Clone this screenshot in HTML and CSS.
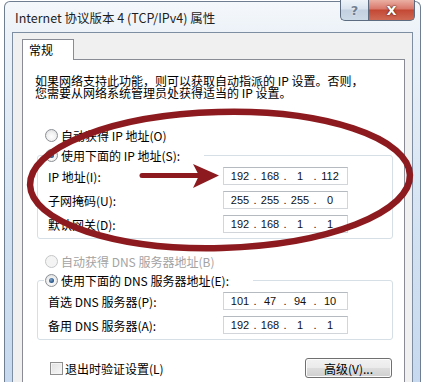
FILE: index.html
```html
<!DOCTYPE html>
<html lang="zh-CN">
<head>
    <meta charset="UTF-8">
    <meta name="viewport" content="width=device-width, initial-scale=1.0">
    <title>Internet 协议版本 4 (TCP/IPv4) 属性</title>
    <link rel="stylesheet" href="styles.css">
</head>
<body>

    <!-- Pencere -->
    <div class="window">
        <div class="titlebar">
            <span class="title">Internet 协议版本 4 (TCP/IPv4) 属性</span>
            <div class="caption-buttons">
                <span class="cap-btn help">?</span>
                <span class="cap-btn close">X</span>
            </div>
        </div>

        <div class="client">
            <div class="tabs">
                <span class="tab">常规</span>
            </div>

            <div class="panel">
                <p class="intro">如果网络支持此功能，则可以获取自动指派的 IP 设置。否则，<br>您需要从网络系统管理员处获得适当的 IP 设置。</p>

                <div class="option"><span class="radio"></span>自动获得 IP 地址(O)</div>

                <div class="group">
                    <div class="option group-title"><span class="radio on"></span>使用下面的 IP 地址(S):</div>
                    <div class="field">
                        <label>IP 地址(I):</label>
                        <div class="ipbox"><span>192</span><i>.</i><span>168</span><i>.</i><span>1</span><i>.</i><span>112</span></div>
                    </div>
                    <div class="field">
                        <label>子网掩码(U):</label>
                        <div class="ipbox"><span>255</span><i>.</i><span>255</span><i>.</i><span>255</span><i>.</i><span>0</span></div>
                    </div>
                    <div class="field">
                        <label>默认网关(D):</label>
                        <div class="ipbox"><span>192</span><i>.</i><span>168</span><i>.</i><span>1</span><i>.</i><span>1</span></div>
                    </div>
                </div>

                <div class="option disabled gap-dns"><span class="radio"></span>自动获得 DNS 服务器地址(B)</div>

                <div class="group group-dns">
                    <div class="option group-title"><span class="radio on"></span>使用下面的 DNS 服务器地址(E):</div>
                    <div class="field">
                        <label>首选 DNS 服务器(P):</label>
                        <div class="ipbox"><span>101</span><i>.</i><span>47</span><i>.</i><span>94</span><i>.</i><span>10</span></div>
                    </div>
                    <div class="field">
                        <label>备用 DNS 服务器(A):</label>
                        <div class="ipbox"><span>192</span><i>.</i><span>168</span><i>.</i><span>1</span><i>.</i><span>1</span></div>
                    </div>
                </div>

                <div class="footer">
                    <div class="check-row"><span class="checkbox"></span>退出时验证设置(L)</div>
                    <button class="btn">高级(V)...</button>
                </div>
            </div>
        </div>
    </div>

    <!-- Kırmızı işaretler -->
    <svg class="markup" width="434" height="382" viewBox="0 0 434 382">
        <ellipse cx="220" cy="180" rx="190" ry="68" transform="rotate(-1.5 220 180)"
                 fill="none" stroke="#8c1a1e" stroke-width="6.5"/>
        <line x1="142" y1="175.5" x2="200" y2="175.5" stroke="#8c1a1e" stroke-width="5" stroke-linecap="round"/>
        <polygon points="193,164 219,175.5 193,188 199,175.5" fill="#8c1a1e"/>
    </svg>

</body>
</html>
```

FILE: styles.css
```css
/* Genel */
* {
    margin: 0;
    padding: 0;
    box-sizing: border-box;
}

html, body {
    width: 434px;
    height: 382px;
    overflow: hidden;
}

body {
    position: relative;
    background-color: #fff;
    font-family: "Noto Sans CJK SC", sans-serif;
    font-size: 12px;
    color: #000;
}

/* Pencere çerçevesi */
.window {
    margin: 1px 13px 0 4px;
    height: 381px;
    padding: 0 7px;
    border: 1px solid #6f7f91;
    border-bottom: none;
    border-radius: 6px 6px 0 0;
    background: linear-gradient(180deg, #f5f8fb 0, #ecf2f8 30px, #d3e2f2 60%, #c6d9ee 100%);
}

.titlebar {
    display: flex;
    align-items: flex-start;
    height: 30px;
}

.title {
    margin-left: 3px;
    padding-top: 6px;
    line-height: 20px;
    font-size: 12.5px;
    color: #1e1e1e;
    white-space: nowrap;
}

.caption-buttons {
    display: flex;
    margin-left: auto;
    margin-top: -2px;
    margin-right: -2px;
}

.cap-btn {
    display: flex;
    justify-content: center;
    align-items: center;
    height: 21px;
    border: 1px solid #5d6c80;
    border-top: none;
    font-family: "DejaVu Sans", sans-serif;
    font-weight: bold;
}

.help {
    width: 28px;
    border-right: none;
    border-radius: 0 0 0 5px;
    background: linear-gradient(180deg, #eef3f9 0, #d9e3ee 45%, #c2d0df 50%, #ccd9e7 100%);
    color: #6f7f93;
    font-size: 13px;
    text-shadow: 0 0 2px #fff;
}

.close {
    width: 47px;
    border-radius: 0 0 5px 0;
    background: linear-gradient(180deg, #eab0a3 0, #d8776a 45%, #c34834 50%, #cf6a55 100%);
    color: #fff;
    font-size: 13px;
    text-shadow: 0 0 1px #4a1a12, 0 0 2px #4a1a12;
}

/* İstemci alanı */
.client {
    height: 351px;
    padding: 6px 7px 0 9px;
    border: 1px solid #7d8ea2;
    border-bottom: none;
    background-color: #f0f0f0;
}

.tabs {
    display: flex;
    height: 20px;
}

.tab {
    position: relative;
    z-index: 1;
    width: 52px;
    height: 21px;
    padding-left: 6px;
    line-height: 20px;
    background-color: #fff;
    border: 1px solid #898c95;
    border-bottom: none;
}

.panel {
    height: 324px;
    padding-top: 15px;
    background-color: #fff;
    border: 1px solid #898c95;
    border-bottom: none;
}

.intro {
    padding-left: 12px;
    line-height: 12px;
    white-space: nowrap;
}

/* Seçenekler */
.option {
    display: flex;
    align-items: center;
    height: 20px;
    padding-left: 22px;
    white-space: nowrap;
}

.intro + .option {
    margin-top: 26px;
}

.radio {
    position: relative;
    width: 13px;
    height: 13px;
    margin-right: 3px;
    border: 1px solid #8b8f94;
    border-radius: 50%;
    background: radial-gradient(circle at 50% 60%, #fff 0, #f2f2f2 45%, #d4d6d8 100%);
}

.radio.on::after {
    content: "";
    position: absolute;
    top: 3px;
    left: 3px;
    width: 5px;
    height: 5px;
    border-radius: 50%;
    background: radial-gradient(circle at 40% 35%, #7fa3c9 0, #2c5d8e 60%, #1d3f66 100%);
}

.option.disabled {
    color: #a3a3a3;
}

.option.disabled .radio {
    border-color: #c4c6c8;
    background: #f4f4f4;
}

.gap-dns {
    margin-top: 12px;
}

/* Grup kutuları */
.group {
    margin: 10px 11px 0 14px;
    padding: 0 0 5px 10px;
    border: 1px solid #d5dfe5;
    border-radius: 3px;
}

.group-dns {
    margin-top: 9px;
}

.group-title {
    width: fit-content;
    margin: -11px 0 2px -4px;
    padding: 0 24px 0 1px;
    background-color: #fff;
}

.field {
    display: flex;
    align-items: center;
    height: 18px;
    margin-top: 6px;
}

.group-title + .field {
    margin-top: 0;
}

.field label {
    width: 175px;
    white-space: nowrap;
}

.ipbox {
    display: grid;
    grid-template-columns: 26px 4px 26px 4px 26px 4px 26px;
    align-items: center;
    width: 125px;
    height: 18px;
    padding-left: 3px;
    border: 1px solid #d2d5da;
    border-top-color: #b5b9c0;
    font-family: "Liberation Sans", sans-serif;
    font-size: 11px;
    color: #111;
}

.ipbox span {
    text-align: center;
}

.ipbox i {
    font-style: normal;
    text-align: center;
}

/* Alt satır */
.footer {
    display: flex;
    justify-content: space-between;
    align-items: center;
    height: 20px;
    margin: 18px 12px 0 27px;
}

.check-row {
    display: flex;
    align-items: center;
    white-space: nowrap;
}

.checkbox {
    width: 13px;
    height: 13px;
    margin-right: 2px;
    border: 1px solid #8f8f8f;
    background: linear-gradient(135deg, #e0e0e0 0, #f8f8f8 100%);
    box-shadow: inset 0 0 0 1px #f4f4f4;
}

.btn {
    width: 87px;
    height: 20px;
    border: 1px solid #707070;
    border-radius: 3px;
    background: linear-gradient(180deg, #f2f2f2 0, #ebebeb 48%, #dddddd 52%, #cfcfcf 100%);
    font-family: "Noto Sans CJK SC", sans-serif;
    font-size: 12px;
    color: #000;
    box-shadow: inset 0 0 0 1px #fcfcfc;
}

/* İşaretler */
.markup {
    position: absolute;
    top: 0;
    left: 0;
    pointer-events: none;
}
```
